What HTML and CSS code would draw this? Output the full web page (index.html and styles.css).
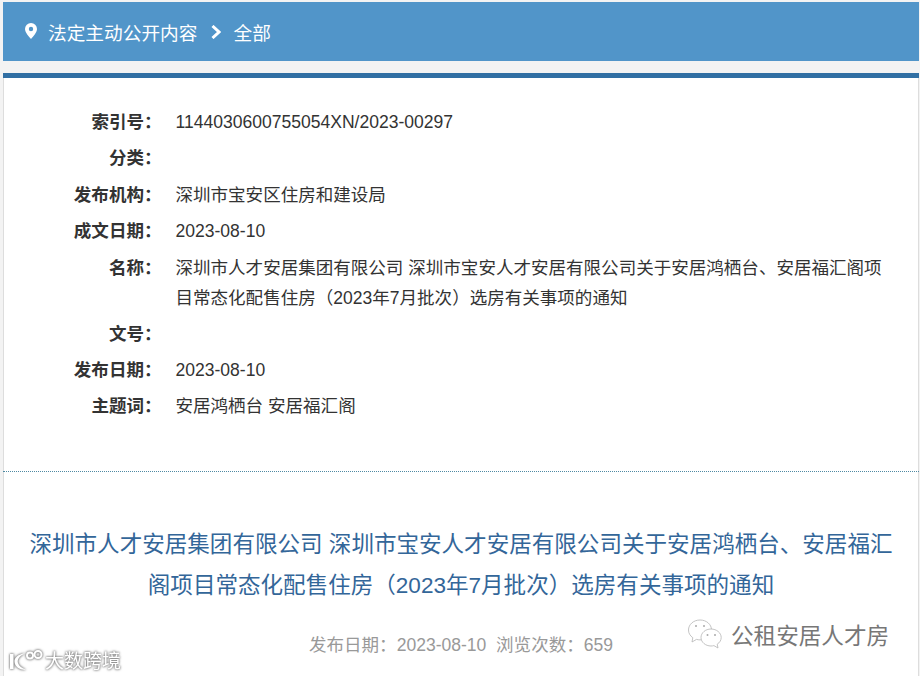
FILE: index.html
```html
<!DOCTYPE html>
<html lang="zh-CN">
<head>
<meta charset="utf-8">
<title>法定主动公开内容</title>
<link rel="stylesheet" href="styles.css">
</head>
<body>
<div class="crumb">
  <svg class="pin" viewBox="0 0 12 16" width="12" height="16"><path fill="#fff" fill-rule="evenodd" d="M6 0a6 6 0 0 1 6 6c0 3.600-4 7.600-6 10C4 13.600 0 9.600 0 6a6 6 0 0 1 6-6zm0 3.800a2.200 2.200 0 1 0 0 4.400 2.200 2.200 0 0 0 0-4.400z"/></svg>
  <span>法定主动公开内容</span>
  <svg class="chev" viewBox="0 0 10 14" width="10" height="14"><path fill="none" stroke="#fff" stroke-width="3" d="M1.500 1 8 7l-6.500 6"/></svg>
  <span>全部</span>
</div>
<main class="card">
  <dl class="meta">
    <div class="row"><dt>索引号：</dt><dd>1144030600755054XN/2023-00297</dd></div>
    <div class="row"><dt>分类：</dt><dd></dd></div>
    <div class="row"><dt>发布机构：</dt><dd>深圳市宝安区住房和建设局</dd></div>
    <div class="row"><dt>成文日期：</dt><dd>2023-08-10</dd></div>
    <div class="row"><dt>名称：</dt><dd>深圳市人才安居集团有限公司 深圳市宝安人才安居有限公司关于安居鸿栖台、安居福汇阁项目常态化配售住房（2023年7月批次）选房有关事项的通知</dd></div>
    <div class="row"><dt>文号：</dt><dd></dd></div>
    <div class="row"><dt>发布日期：</dt><dd>2023-08-10</dd></div>
    <div class="row"><dt>主题词：</dt><dd>安居鸿栖台 安居福汇阁</dd></div>
  </dl>
  <h1 class="title">深圳市人才安居集团有限公司 深圳市宝安人才安居有限公司关于安居鸿栖台、安居福汇阁项目常态化配售住房（2023年7月批次）选房有关事项的通知</h1>
  <p class="info">发布日期：2023-08-10&nbsp;&nbsp;浏览次数：659</p>
</main>
<div class="mark-left">
  <svg viewBox="0 0 36 22" width="36" height="22"><path fill="#fff" d="M2 5h3.500v15H2zM17 4.500C11 7 9 11 10 14c1 3 4 5.500 8 6.500-5 .8-11-2-11.500-7.500C6 9 10 5 17 4.500z"/><g fill="none" stroke="#fff" stroke-width="2"><circle cx="22" cy="6.500" r="3"/><circle cx="30" cy="5.500" r="3.500"/></g></svg>
  <span>大数跨境</span>
</div>
<div class="mark-right">
  <svg viewBox="0 0 36 32" width="36" height="32"><g fill="#fff" stroke="#b5b5b5" stroke-width=".8"><path d="M13 1C6.500 1 1.500 5.500 1.500 11c0 3.200 1.700 5.900 4.300 7.700L5 23l4.500-2.600c1.200.3 2.400.5 3.500.5 6.500 0 11.500-4.500 11.500-10S19.500 1 13 1z"/><path d="M24 10c-5.500 0-10 3.800-10 8.500S18.500 27 24 27c1 0 2-.1 2.900-.4L31 29l-.8-3.800c2.500-1.600 4-3.900 4-6.700C34.200 13.800 29.500 10 24 10z"/></g><g fill="#aaa"><circle cx="9" cy="7" r="1"/><circle cx="17" cy="7" r="1"/><circle cx="20.500" cy="16" r="1"/><circle cx="28" cy="16" r="1"/></g></svg>
  <span>公租安居人才房</span>
</div>
</body>
</html>
```
FILE: styles.css
```css
html, body { margin: 0; padding: 0; }
body {
  width: 920px;
  height: 676px;
  overflow: hidden;
  position: relative;
  display: flex;
  flex-direction: column;
  background: #f3f3f3;
  padding: 2px 1px 0 3px;
  box-sizing: border-box;
  font-family: "Liberation Sans", "Noto Sans CJK SC", sans-serif;
}
.crumb {
  flex: none;
  height: 59px;
  background: #5195c9;
  color: #fff;
  display: flex;
  align-items: center;
  font-size: 18.7px;
  padding-left: 22px;
}
.pin { margin-right: 11px; margin-top: -2px; }
.chev { margin: 0 13px 0 13px; }
.card {
  flex: 1;
  margin-top: 12px;
  background: #fff;
  border-top: 5px solid #316fa3;
  box-shadow: inset 1px 0 0 #ddd, inset -1px 0 0 #ddd;
}
.meta {
  margin: 0;
  padding: 26px 35px 46px 0;
  font-size: 17.55px;
  color: #333;
  border-bottom: 1px dotted #4f8aa3;
}
.row { display: flex; line-height: 36.400px; }
.row dt { width: 158.500px; text-align: right; font-weight: bold; flex: none; }
.row dd { margin: 0 0 0 14px; line-height: 30px; padding: 3px 0; min-height: 30px; }
.title {
  margin: 52px 0 0;
  padding: 0 26px;
  font-size: 22.55px;
  font-weight: normal;
  line-height: 41px;
  text-align: center;
  color: #336699;
}
.info {
  margin: 25px 0 0;
  text-align: center;
  font-size: 17.55px;
  color: #999;
}
.mark-left {
  position: absolute;
  left: 8px;
  top: 646px;
  display: flex;
  align-items: center;
  gap: 1px;
  color: #fff;
  font-size: 19px;
  filter: drop-shadow(0 0 1px #777) drop-shadow(0 0 1px #aaa);
}
.mark-right {
  position: absolute;
  left: 687px;
  top: 618px;
  display: flex;
  align-items: center;
  gap: 8px;
  color: #777;
  font-size: 22.6px;
}
```
